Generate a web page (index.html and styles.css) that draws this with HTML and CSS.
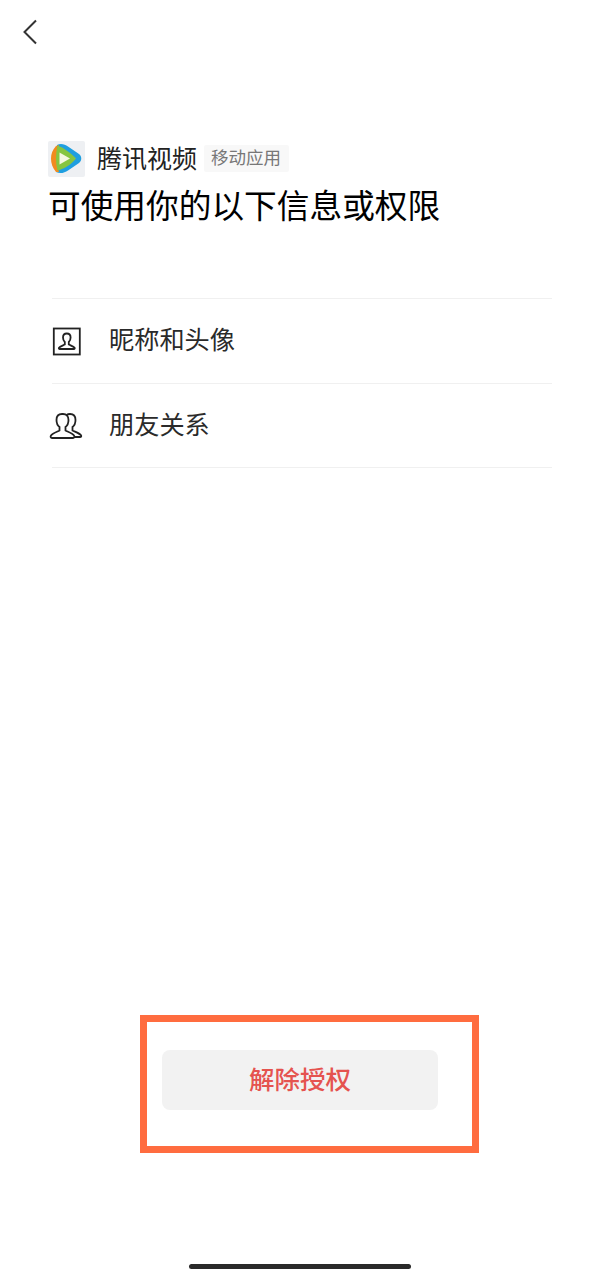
FILE: index.html
```html
<!DOCTYPE html>
<html>
	<head>
		<meta charset="utf-8">
		<title>腾讯视频</title>
		<link rel="stylesheet" href="styles.css">
	</head>
	<body>
		<div class="page">
			<div class="nav">
				<svg class="back" width="16" height="26" viewBox="0 0 16 26"><path d="M14 1.500 2.500 13 14 24.500" fill="none" stroke="#333" stroke-width="2"/></svg>
			</div>
			<div class="head">
				<div class="app">
					<svg class="logo" width="37" height="36" viewBox="0 0 37 36">
						<rect width="37" height="36" rx="2" fill="#eef0f3"/>
						<path d="M9 4C13 2 17 3.500 20 5.500L31 13C34 15.500 34 19.500 31 22L20 29.500C16.500 32 12 33 8 31z" fill="#1f9fe0"/>
						<path d="M8 5C4.500 9 3 13 3 17.500S4.500 27 8 31L11 31C8.500 24 8.500 12 11 4z" fill="#f28a1e"/>
						<path d="M9.500 4.500C7.500 13 7.500 22 9.500 29.500C15 28.500 23 24 28 17.500C23 12 15 6.500 9.500 4.500z" fill="#86c540"/>
						<path d="M11.500 11.500v12l10.500-6z" fill="#f4f7e0"/>
					</svg>
					<span class="name">腾讯视频</span>
					<span class="tag">移动应用</span>
				</div>
				<h1 class="title">可使用你的以下信息或权限</h1>
			</div>
			<ul class="list">
				<li class="item">
					<svg class="icon" width="30" height="30" viewBox="0 0 30 30" fill="none" stroke="#222" stroke-width="1.800">
						<rect x="2.800" y="2.500" width="26" height="26"/>
						<path d="M15.800 7.500c-2.500 0-3.800 1.800-3.800 4 0 2 .8 3.500 1.800 4.500v2.500c-2 1-5 2-5.800 3.200-.4.700 0 1.300.7 1.300h14.200c.7 0 1.100-.6.700-1.300-.8-1.200-3.800-2.200-5.800-3.200V16c1-1 1.800-2.500 1.800-4.500 0-2.200-1.300-4-3.800-4z"/>
					</svg>
					<span class="label">昵称和头像</span>
				</li>
				<li class="item">
					<svg class="icon" width="36" height="30" viewBox="0 0 36 30" fill="none" stroke="#222" stroke-width="1.800">
						<path d="M13 2c-3.500 0-5.500 2.500-5.500 6 0 3 1 5.500 3 7v3.500c-3 1.500-7 3-8.500 5-.8 1.200-.3 2.500 1 2.500h21c1.300 0 1.800-1.300 1-2.500-1.500-2-5.500-3.500-8.500-5V15c2-1.500 3-4 3-7 0-3.500-2-6-5.500-6z"/>
						<path d="M17.500 3c1-.7 2-1 3.500-1 3.500 0 5.500 2.500 5.500 6 0 3-1 5.500-3 7v3.500c3 1.500 7 2.800 8.500 4.800.6 1 .2 1.700-1 1.700h-6"/>
					</svg>
					<span class="label">朋友关系</span>
				</li>
			</ul>
			<div class="mark">
				<button class="revoke">解除授权</button>
			</div>
			<div class="home"></div>
		</div>
	</body>
</html>
```

FILE: styles.css
```css
* {
	margin: 0;
	padding: 0;
	box-sizing: border-box;
}
ul {
	list-style: none;
}
html, body {
	background-color: #fff;
}
.page {
	width: 600px;
	height: 1278px;
	display: flex;
	flex-direction: column;
	font-family: "Noto Sans CJK SC", "Liberation Sans", sans-serif;
	color: #222;
	overflow: hidden;
}
.nav {
	height: 141px;
	padding: 19px 0 0 22px;
}
.back {
	display: block;
}
.head {
	padding-left: 48px;
	height: 157px;
}
.app {
	display: flex;
	align-items: center;
	height: 36px;
}
.logo {
	display: block;
	margin-right: 12px;
}
.name {
	font-size: 25px;
	line-height: 32px;
	padding-bottom: 4px;
}
.tag {
	margin: 0 0 1px 7px;
	width: 85px;
	height: 27px;
	padding-left: 7px;
	font-size: 17.500px;
	line-height: 23px;
	color: #777;
	background-color: #f8f8f8;
	border-radius: 2px;
}
.title {
	font-size: 32.700px;
	font-weight: 400;
	line-height: 44px;
	margin-top: 5px;
	color: #000;
}
.list {
	margin-left: 52px;
	width: 500px;
	border-top: 1px solid #f0f0f0;
}
.item {
	position: relative;
	height: 84.500px;
	display: flex;
	align-items: center;
	padding-left: 57px;
	padding-bottom: 5px;
	border-bottom: 1px solid #f0f0f0;
}
.icon {
	position: absolute;
	left: -1px;
	top: 27px;
}
.item:last-child .icon {
	left: -3px;
	top: 28px;
}
.label {
	font-size: 25.200px;
	line-height: 36px;
	color: #2a2a2a;
}
.mark {
	margin: auto 0 0 140px;
	width: 339px;
	height: 138px;
	border: 7px solid #ff6c3f;
	padding: 28px 0 0 15px;
}
.revoke {
	display: block;
	width: 276px;
	height: 60px;
	padding-bottom: 6px;
	border: none;
	border-radius: 8px;
	background-color: #f2f2f2;
	color: #e5534f;
	font-family: inherit;
	font-size: 25.500px;
	font-weight: 500;
}
.home {
	width: 222px;
	height: 5px;
	margin: 111px 0 9px 189px;
	border-radius: 3px;
	background-color: #2a2a2a;
}
```
